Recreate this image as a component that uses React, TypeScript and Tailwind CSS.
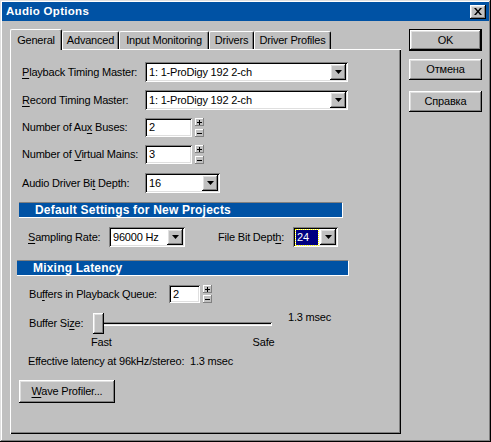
import React from 'react';

const raised =
  'shadow-[inset_-1px_-1px_#000,inset_1px_1px_#fff,inset_-2px_-2px_#808080,inset_2px_2px_#dfdfdf]';
const sunken =
  'shadow-[inset_1px_1px_#808080,inset_-1px_-1px_#fff,inset_2px_2px_#000,inset_-2px_-2px_#dfdfdf]';

const U: React.FC<{ children: React.ReactNode }> = ({ children }) => (
  <span className="underline underline-offset-[2px]">{children}</span>
);

const Arrow = () => (
  <div className={`w-[16px] h-[16px] shrink-0 bg-[#c0c0c0] ${raised} flex items-center justify-center`}>
    <svg width="7" height="4" viewBox="0 0 7 4">
      <path d="M0 0h7L3.5 4z" fill="#000" />
    </svg>
  </div>
);

const Combo: React.FC<{ value: string; className: string; selected?: boolean }> = ({
  value,
  className,
  selected,
}) => (
  <div className={`flex items-center h-[20px] bg-white ${sunken} p-[2px] ${className}`}>
    <div className="flex-1 min-w-0 flex items-center h-full">
      {selected ? (
        <span className="ml-[1px] px-[1px] h-[15px] flex items-center bg-[#000080] text-white outline-1 outline-dotted outline-[#ffff00] w-[22px]">
          {value}
        </span>
      ) : (
        <span className="pl-[2px] whitespace-nowrap">{value}</span>
      )}
    </div>
    <Arrow />
  </div>
);

const SpinBox = ({ sign }: { sign: '+' | '-' }) => (
  <div className="w-[9px] h-[8px] bg-[#c0c0c0] shadow-[inset_-1px_-1px_#808080,inset_1px_1px_#fff] flex items-center justify-center">
    <svg width="5" height="5" viewBox="0 0 5 5">
      <rect x="0" y="2" width="5" height="1" fill="#000" />
      {sign === '+' && <rect x="2" y="0" width="1" height="5" fill="#000" />}
    </svg>
  </div>
);

const Spin: React.FC<{ value: string; className: string }> = ({ value, className }) => (
  <div className="flex items-center">
    <div className={`h-[19px] bg-white ${sunken} pl-[4px] flex items-center ${className}`}>{value}</div>
    <div className="flex flex-col justify-between h-[19px] ml-[3px]">
      <SpinBox sign="+" />
      <SpinBox sign="-" />
    </div>
  </div>
);

const Header: React.FC<{ title: string; className: string }> = ({ title, className }) => (
  <div
    className={`h-[16px] bg-[#0052a4] border-t border-t-[#808080] border-r border-r-white border-b border-b-white flex items-center pl-[16px] text-white font-bold text-[12px] tracking-[0.2px] ${className}`}
  >
    {title}
  </div>
);

const Tab: React.FC<{ label: string; className: string; active?: boolean }> = ({ label, className, active }) => (
  <div
    className={`flex items-center justify-center bg-[#c0c0c0] border-l border-l-white border-t border-t-white rounded-tl-[2px] shadow-[inset_-1px_0_#808080] border-r border-r-black rounded-tr-[2px] ${
      active ? 'h-[21px] -mb-[1px] relative z-10' : 'h-[18px]'
    } ${className}`}
  >
    {label}
  </div>
);

const Button: React.FC<{ children: React.ReactNode; className: string; isDefault?: boolean }> = ({
  children,
  className,
  isDefault,
}) => (
  <div className={`${isDefault ? 'border border-black' : ''} ${className}`}>
    <div className={`w-full h-full bg-[#c0c0c0] ${raised} flex items-center justify-center`}>{children}</div>
  </div>
);

export default function App() {
  return (
    <div
      className="w-[491px] h-[442px] bg-[#c0c0c0] p-[2px] text-[11px] tracking-[-0.2px] text-black leading-none shadow-[inset_-1px_-1px_#000,inset_1px_1px_#dfdfdf,inset_-2px_-2px_#808080,inset_2px_2px_#fff] overflow-hidden"
      style={{ fontFamily: '"Liberation Sans", Arial, sans-serif' }}
    >
      {/* title bar */}
      <div className="h-[19px] bg-[#0052a4] flex items-center justify-between pl-[4px] pr-[3px]">
        <span className="text-white font-bold text-[11.5px] tracking-[0.3px]">Audio Options</span>
        <div className={`w-[16px] h-[14px] bg-[#c0c0c0] ${raised} flex items-center justify-center`}>
          <svg width="8" height="7" viewBox="0 0 8 7">
            <path d="M0 0h2l2 2.5L6 0h2L5 3.5 8 7H6L4 4.5 2 7H0l3-3.5z" fill="#000" />
          </svg>
        </div>
      </div>

      <div className="flex pl-[8px] mt-[8px]">
        {/* tab control */}
        <div className="w-[391px] flex flex-col">
          <div className="flex items-end h-[20px]">
            <Tab label="General" className="w-[52px]" active />
            <Tab label="Advanced" className="w-[57px]" />
            <Tab label="Input Monitoring" className="w-[90px]" />
            <Tab label="Drivers" className="w-[45px]" />
            <Tab label="Driver Profiles" className="w-[77px]" />
          </div>
          <div className="h-[385px] bg-[#c0c0c0] shadow-[inset_1px_1px_#fff,inset_-1px_-1px_#000,inset_-2px_-2px_#808080] flex flex-col">
            <div className="flex items-center pl-[12px] mt-[13px]">
              <div className="w-[123px]">
                <U>P</U>layback Timing Master:
              </div>
              <Combo value="1: 1-ProDigy 192 2-ch" className="w-[203px]" />
            </div>
            <div className="flex items-center pl-[12px] mt-[8px]">
              <div className="w-[123px]">
                <U>R</U>ecord Timing Master:
              </div>
              <Combo value="1: 1-ProDigy 192 2-ch" className="w-[203px]" />
            </div>
            <div className="flex items-center pl-[12px] mt-[8px]">
              <div className="w-[123px]">
                Number of Au<U>x</U> Buses:
              </div>
              <Spin value="2" className="w-[47px]" />
            </div>
            <div className="flex items-center pl-[12px] mt-[8px]">
              <div className="w-[123px]">
                Number of <U>V</U>irtual Mains:
              </div>
              <Spin value="3" className="w-[47px]" />
            </div>
            <div className="flex items-center pl-[12px] mt-[9px]">
              <div className="w-[123px]">
                Audio Driver Bi<U>t</U> Depth:
              </div>
              <Combo value="16" className="w-[75px]" />
            </div>

            <Header title="Default Settings for New Projects" className="ml-[9px] w-[324px] mt-[9px]" />

            <div className="flex items-center pl-[18px] mt-[9px]">
              <div className="w-[81px]">
                <U>S</U>ampling Rate:
              </div>
              <Combo value="96000 Hz" className="w-[76px]" />
              <div className="w-[75px] ml-[33px]">
                File Bit Dept<U>h</U>:
              </div>
              <Combo value="24" className="w-[45px]" selected />
            </div>

            <Header title="Mixing Latency" className="ml-[7px] w-[332px] mt-[13px]" />

            <div className="flex items-center pl-[19px] mt-[9px]">
              <div className="w-[140px]">
                Bu<U>f</U>fers in Playback Queue:
              </div>
              <div className="flex items-center">
                <div className={`h-[18px] w-[31px] bg-white ${sunken} pl-[4px] flex items-center`}>2</div>
                <div className="flex flex-col justify-between h-[18px] ml-[3px]">
                  <SpinBox sign="+" />
                  <SpinBox sign="-" />
                </div>
              </div>
            </div>

            <div className="flex items-center pl-[19px] mt-[10px] h-[21px]">
              <div className="w-[64px]">
                Buffer Si<U>z</U>e:
              </div>
              <div className="relative w-[179px] h-[21px] flex items-center">
                <div className={`w-full h-[4px] ${sunken}`} />
                <div className={`absolute left-0 top-0 w-[11px] h-[21px] bg-[#c0c0c0] ${raised}`} />
              </div>
              <div className="ml-[16px] self-start mt-[-1px]">1.3 msec</div>
            </div>
            <div className="flex pl-[81px] mt-[3px]">
              <span>Fast</span>
              <span className="ml-[141px]">Safe</span>
            </div>

            <div className="pl-[18px] mt-[8px]">Effective latency at 96kHz/stereo:&nbsp; 1.3 msec</div>

            <Button className="ml-[9px] mt-[13px] w-[96px] h-[23px]">
              <span>
                <U>W</U>ave Profiler...
              </span>
            </Button>
          </div>
        </div>

        {/* right buttons */}
        <div className="ml-[8px] w-[73px] flex flex-col">
          <Button className="h-[22px] w-[73px]" isDefault>
            OK
          </Button>
          <Button className="h-[21px] w-[73px] mt-[8px]">Отмена</Button>
          <Button className="h-[21px] w-[73px] mt-[11px]">Справка</Button>
        </div>
      </div>
    </div>
  );
}
